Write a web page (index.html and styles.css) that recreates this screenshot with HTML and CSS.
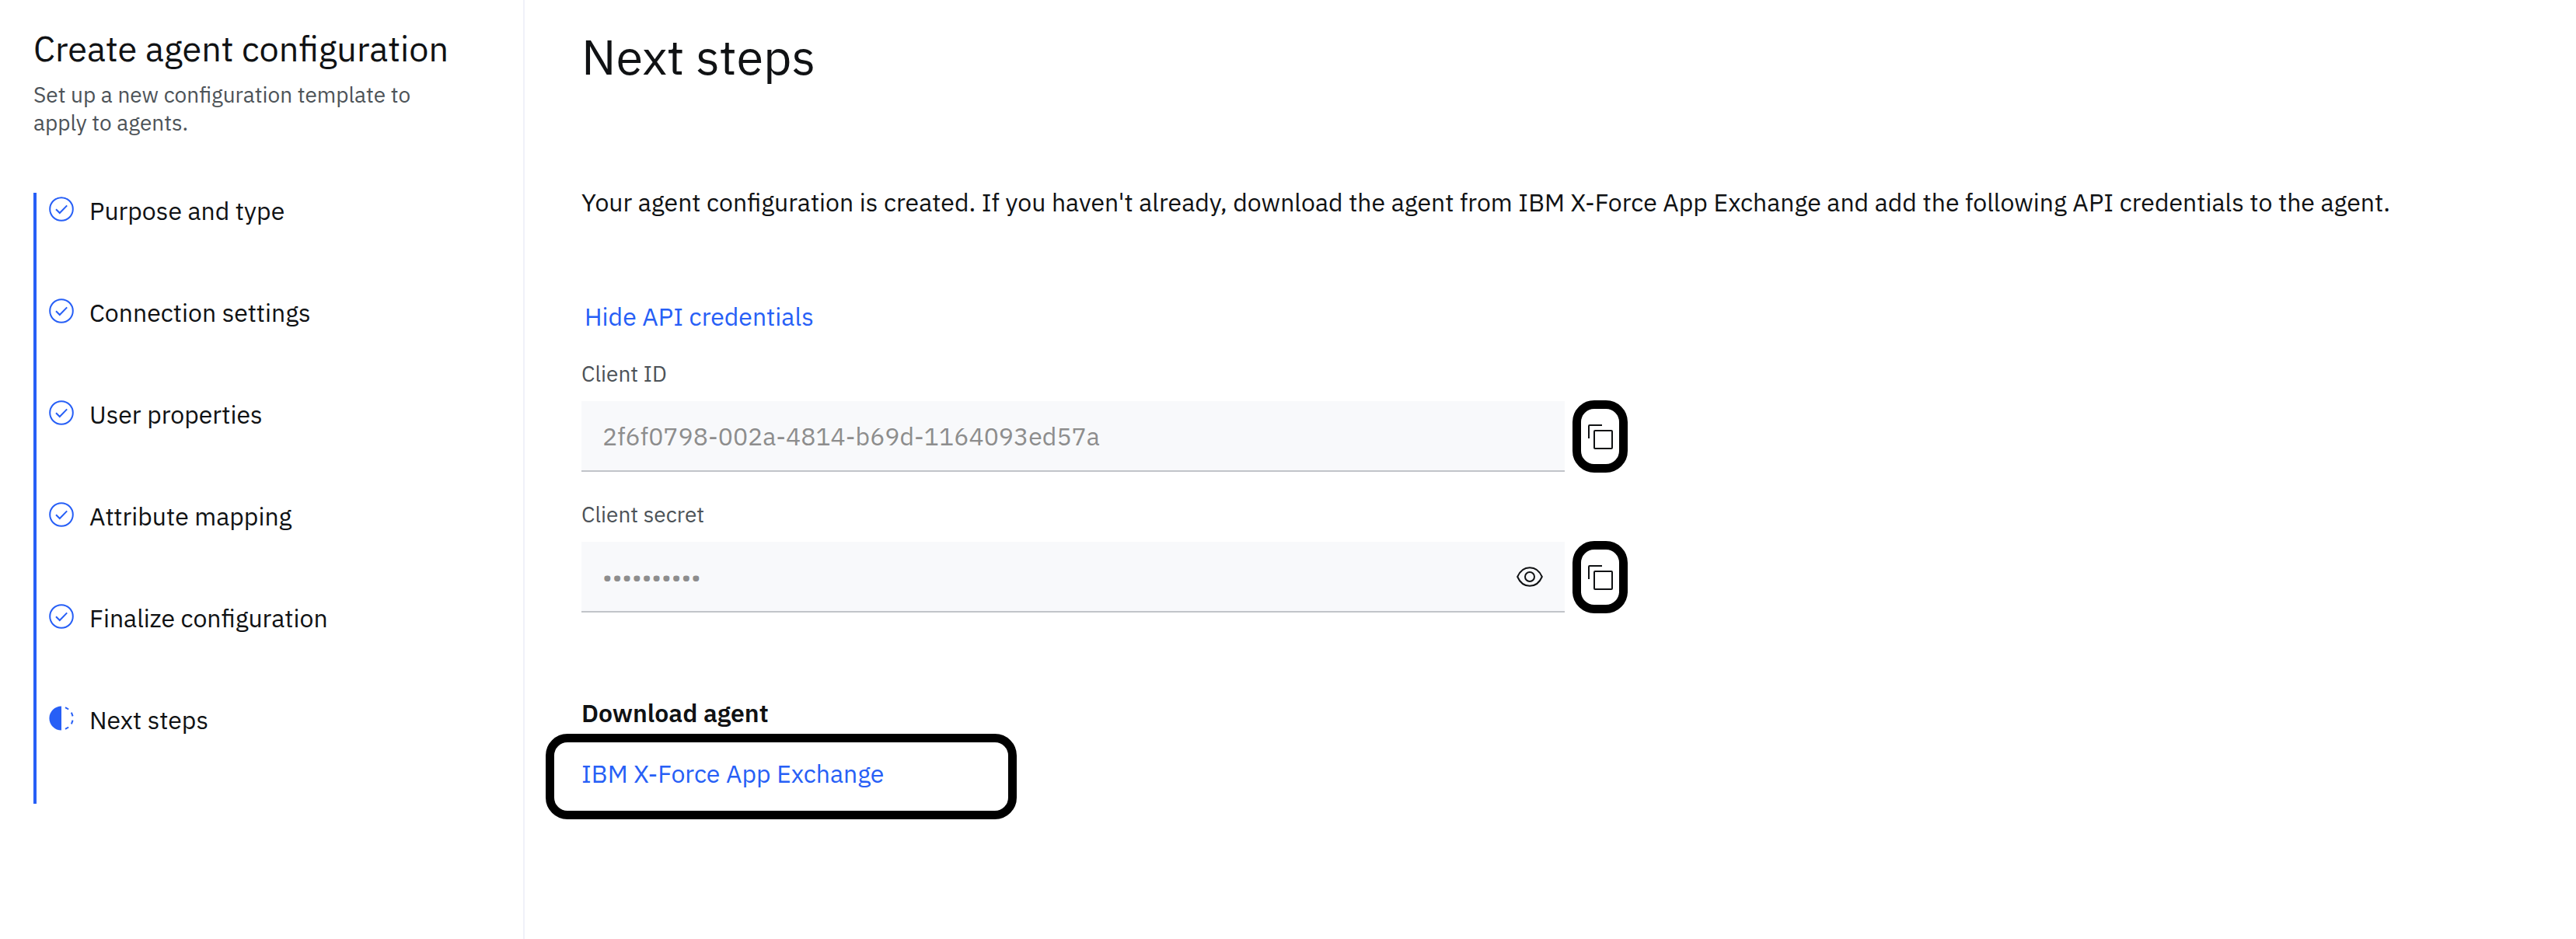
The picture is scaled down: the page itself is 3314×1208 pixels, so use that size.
FILE: index.html
```html
<!DOCTYPE html>
<html lang="en">
<head>
  <meta charset="UTF-8" />
  <meta name="viewport" content="width=device-width, initial-scale=1.0"/>
  <title>Create agent configuration</title>
  <link rel="stylesheet" href="styles.css">
</head>
<body>
  <!-- Shared icons -->
  <svg class="sprite" aria-hidden="true">
    <symbol id="icon-done" viewBox="0 0 32 32">
      <circle cx="16" cy="16" r="14.8" fill="none" stroke="currentColor" stroke-width="2"/>
      <path d="M9 16.2l4.8 4.8 9.4-9.6" fill="none" stroke="currentColor" stroke-width="2"/>
    </symbol>
    <symbol id="icon-current" viewBox="0 0 32 32">
      <path d="M16 .4a15.6 15.6 0 0 0 0 31.2z" fill="currentColor"/>
      <path d="M21 2.1l4.2 2.4M28.9 8.6l1.7 4.7M30.6 18.7l-1.7 4.7M25.2 27.5L21 29.9" fill="none" stroke="currentColor" stroke-width="2"/>
    </symbol>
    <symbol id="icon-copy" viewBox="0 0 32 32">
      <rect x="8" y="8" width="23" height="23" rx="1" fill="none" stroke="currentColor" stroke-width="2"/>
      <path d="M1 18V2q0-1 1-1h16" fill="none" stroke="currentColor" stroke-width="2"/>
    </symbol>
    <symbol id="icon-view" viewBox="0 0 34 26">
      <path d="M1.2 13C4.4 5.600 10.400 1.200 17 1.200S29.600 5.600 32.800 13C29.600 20.400 23.600 24.800 17 24.800S4.400 20.400 1.200 13z" fill="none" stroke="currentColor" stroke-width="2"/>
      <circle cx="17" cy="13" r="6" fill="none" stroke="currentColor" stroke-width="2"/>
    </symbol>
  </svg>

  <div class="layout">
    <!-- Progress sidebar -->
    <aside class="sidebar">
      <h2 class="sidebar-title">Create agent configuration</h2>
      <p class="sidebar-text">Set up a new configuration template to apply to agents.</p>
      <ol class="steps">
        <li class="step"><svg class="step-icon"><use href="#icon-done"/></svg>Purpose and type</li>
        <li class="step"><svg class="step-icon"><use href="#icon-done"/></svg>Connection settings</li>
        <li class="step"><svg class="step-icon"><use href="#icon-done"/></svg>User properties</li>
        <li class="step"><svg class="step-icon"><use href="#icon-done"/></svg>Attribute mapping</li>
        <li class="step"><svg class="step-icon"><use href="#icon-done"/></svg>Finalize configuration</li>
        <li class="step" aria-current="step"><svg class="step-icon"><use href="#icon-current"/></svg>Next steps</li>
      </ol>
    </aside>

    <main class="content">
      <h1>Next steps</h1>
      <p class="intro">Your agent configuration is created. If you haven't already, download the agent from IBM X-Force App Exchange and add the following API credentials to the agent.</p>

      <button type="button" class="toggle-btn">Hide API credentials</button>

      <form class="credentials">
        <div class="form-group">
          <label for="clientId">Client ID</label>
          <div class="field-row">
            <div class="field">
              <input type="text" id="clientId" value="2f6f0798-002a-4814-b69d-1164093ed57a" readonly/>
            </div>
            <button type="button" class="copy-btn" aria-label="Copy client ID"><svg class="copy-icon"><use href="#icon-copy"/></svg></button>
          </div>
        </div>

        <div class="form-group">
          <label for="clientSecret">Client secret</label>
          <div class="field-row">
            <div class="field">
              <input type="password" id="clientSecret" value="0123456789" readonly/>
              <button type="button" class="view-btn" aria-label="Show client secret"><svg class="view-icon"><use href="#icon-view"/></svg></button>
            </div>
            <button type="button" class="copy-btn" aria-label="Copy client secret"><svg class="copy-icon"><use href="#icon-copy"/></svg></button>
          </div>
        </div>
      </form>

      <h3>Download agent</h3>
      <div class="download">
        <a href="#">IBM X-Force App Exchange</a>
      </div>
    </main>
  </div>
</body>
</html>
```
FILE: styles.css
```css
:root {
  --blue: #275ff6;
  --text: #101214;
  --text-light: #4d5358;
  --field: #f8f9fb;
  --mark: #000;
}

* {
  box-sizing: border-box;
}

body {
  margin: 0;
  background: #fff;
  color: var(--text);
  font-family: "IBM Plex Sans", Roboto, sans-serif;
  font-size: 32px;
  line-height: 40px;
}

h1, h2, h3, p, ol {
  margin: 0;
  padding: 0;
}

svg {
  display: block;
  flex-shrink: 0;
}

button, input {
  font: inherit;
  color: inherit;
}

button {
  padding: 0;
  background: none;
  border: none;
  cursor: pointer;
}

.sprite {
  position: absolute;
  width: 0;
  height: 0;
}

.layout {
  display: flex;
  min-height: 100vh;
}

/* Sidebar */
.sidebar {
  flex: 0 0 675px;
  padding: 34px 80px 0 43px;
  border-right: 2px solid #f0f1f9;
}

.sidebar-title {
  font-size: 45px;
  line-height: 56px;
  font-weight: 400;
  white-space: nowrap;
}

.sidebar-text {
  margin-top: 14px;
  font-size: 28px;
  line-height: 36px;
  color: var(--text-light);
}

.steps {
  margin-top: 72px;
  border-left: 4px solid var(--blue);
  list-style: none;
}

.step {
  display: flex;
  align-items: flex-start;
  gap: 20px;
  height: 131px;
  padding: 3px 0 0 16px;
}

.step-icon {
  width: 32px;
  height: 32px;
  margin-top: 2px;
  color: var(--blue);
}

/* Main column */
.content {
  flex: 1;
  min-width: 0;
  padding: 32px 73px 60px;
}

h1 {
  font-size: 63px;
  line-height: 80px;
  font-weight: 400;
}

.intro {
  margin-top: 128px;
}

.toggle-btn {
  display: block;
  margin-top: 107px;
  padding: 0 4px;
  color: var(--blue);
}

.credentials {
  max-width: 1346px;
}

.form-group {
  margin-top: 36px;
}

label {
  display: block;
  margin-bottom: 16px;
  font-size: 28px;
  line-height: 36px;
  color: var(--text-light);
}

.field-row {
  display: flex;
  align-items: center;
  gap: 10px;
}

.field {
  flex: 1;
  display: flex;
  align-items: center;
  height: 91px;
  padding: 0 28px 0 27px;
  background: var(--field);
  border-bottom: 2px solid #c1c4c9;
}

.field input {
  flex: 1;
  min-width: 0;
  padding: 0;
  border: none;
  outline: none;
  background: transparent;
  color: #8d8d8d;
}

.view-icon {
  width: 34px;
  height: 26px;
}

.copy-btn {
  display: flex;
  align-items: center;
  justify-content: center;
  width: 71px;
  height: 93px;
  border: 11px solid var(--mark);
  border-radius: 28px;
}

.copy-icon {
  width: 32px;
  height: 32px;
}

h3 {
  margin-top: 108px;
  font-size: 32px;
  line-height: 40px;
  font-weight: 600;
}

.download {
  width: 606px;
  height: 110px;
  margin: 7px 0 0 -46px;
  padding: 20px 35px;
  border: 11px solid var(--mark);
  border-radius: 28px;
}

a {
  color: var(--blue);
  text-decoration: none;
}
```
